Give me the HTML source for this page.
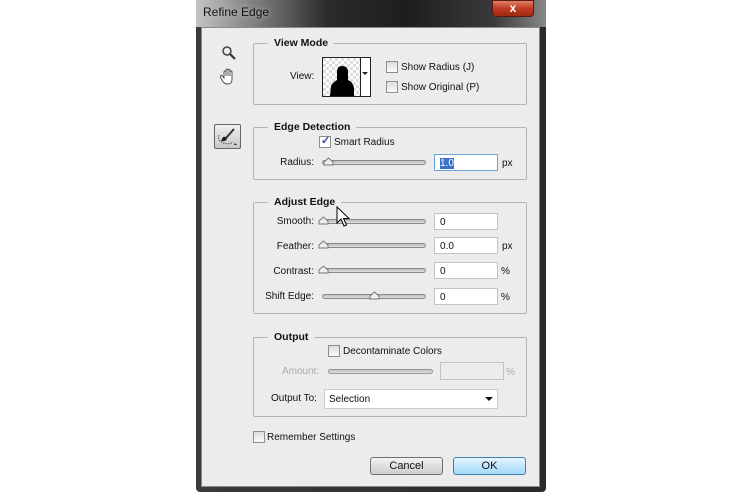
<!DOCTYPE html>
<html><head><meta charset="utf-8"><style>
*{margin:0;padding:0;box-sizing:border-box}
body{width:740px;height:493px;background:#fff;position:relative;overflow:hidden;font-family:"Liberation Sans",Arial,sans-serif;font-size:10px;color:#111}
.a{position:absolute}
#win{left:196px;top:0;width:350px;height:492px;background:linear-gradient(90deg,#3a3a3a 0,#2a2a2a 100%);border-radius:0 0 4px 4px}
#title{left:196px;top:0;width:350px;height:27px;background:linear-gradient(90deg,#c4c4c4 0,#9a9a9a 10%,#2a2a2a 38%,#1e1e1e 60%,#3a3a3a 85%,#888 100%)}
#client{left:201px;top:27px;width:339px;height:460px;background:#ececec;border:1px solid #8a8a8a}
.grp{position:absolute;border:1px solid #b4b4b4;border-radius:2px}
.lg{position:absolute;background:#ececec;padding:0 6px;font-weight:bold;font-size:10.5px;top:-7px;left:14px}
.cb{position:absolute;width:12px;height:12px;border:1px solid #8e8e8e;background:linear-gradient(#ddd,#fafafa)}
.sl{position:absolute;height:5px;border:1px solid #8a8a8a;border-radius:3px;background:linear-gradient(#bdbdbd,#e0e0e0)}
.th{position:absolute;width:11px;height:9px}
.in{position:absolute;height:17px;background:#fff;border:1px solid #c4c4c4;padding:3px 5px;font-size:10px}
.r{text-align:right}
.btn{position:absolute;height:18px;border:1px solid #707070;border-radius:3px;background:linear-gradient(#f4f4f4,#dedede 50%,#d0d0d0);text-align:center;font-size:11px;line-height:16px}
</style></head><body>
<div id="win" class="a"></div>
<div id="title" class="a"></div>
<div class="a" style="left:203px;top:5px;font-size:12px;color:#111;text-shadow:0 0 6px #ccc">Refine Edge</div>
<div class="a" style="left:492px;top:0;width:42px;height:17px;border:1px solid #5a1a10;border-radius:0 0 4px 4px;background:linear-gradient(#e0806a,#c03a20 50%,#a02810);color:#fff;font-weight:bold;text-align:center;font-size:12px;line-height:15px">x</div>
<div id="client" class="a"></div>

<svg class="a" style="left:221px;top:45px" width="16" height="16"><circle cx="6" cy="6" r="4" fill="none" stroke="#444" stroke-width="1.5"/><line x1="9" y1="9" x2="14" y2="14" stroke="#333" stroke-width="2.2"/></svg>
<svg class="a" style="left:220px;top:68px" width="17" height="18"><path d="M4 10 V4 a1 1 0 0 1 2 0 V8 V2 a1 1 0 0 1 2 0 V8 V2.5 a1 1 0 0 1 2 0 V8 V4 a1 1 0 0 1 2 0 V11 q0 5 -4 5 h-1 q-3 0 -5 -4 l-1.5 -3 a1 1 0 0 1 2 -1 z" fill="#fff" stroke="#444" stroke-width="0.9"/></svg>
<div class="a" style="left:214px;top:124px;width:27px;height:25px;border:1px solid #666;border-radius:2px;background:linear-gradient(#f0f0f0,#c8c8c8)"></div>
<svg class="a" style="left:216px;top:126px" width="24" height="22"><path d="M18 3 L10 12" stroke="#333" stroke-width="2"/><path d="M7 11 q3 -1 4 2 q-2 3 -6 2 z" fill="#222"/><path d="M3 9 q-2 5 4 8 q6 2 10 -1" fill="none" stroke="#555" stroke-dasharray="1.5 1"/><path d="M19 17 l2 2 h-3z" fill="#222"/></svg>

<div class="grp" style="left:253px;top:43px;width:274px;height:62px"><div class="lg">View Mode</div></div>
<div class="a" style="left:290px;top:71px">View:</div>
<div class="a" style="left:322px;top:57px;width:49px;height:40px;border:1px solid #222;background:#fff"></div>
<svg class="a" style="left:323px;top:58px" width="37" height="38"><defs><pattern id="ck" width="6" height="6" patternUnits="userSpaceOnUse"><rect width="6" height="6" fill="#fff"/><rect width="3" height="3" fill="#ddd"/><rect x="3" y="3" width="3" height="3" fill="#ddd"/></pattern></defs><rect width="37" height="38" fill="url(#ck)"/><path d="M7 38 L8 28 Q10 24 14 22 L14 14 Q14 8 19 8 Q25 8 25 14 L25 22 Q30 24 31 30 L31 38Z" fill="#000"/></svg>
<div class="a" style="left:360px;top:57px;width:1px;height:40px;background:#222"></div>
<div class="a" style="left:362px;top:72px;width:0;height:0;border-left:3px solid transparent;border-right:3px solid transparent;border-top:3px solid #222"></div>
<div class="cb" style="left:386px;top:61px"></div><div class="a" style="left:401px;top:62px">Show Radius (J)</div>
<div class="cb" style="left:386px;top:81px"></div><div class="a" style="left:401px;top:82px">Show Original (P)</div>

<div class="grp" style="left:253px;top:127px;width:274px;height:53px"><div class="lg">Edge Detection</div></div>
<div class="cb" style="left:319px;top:136px;background:#fff"></div>
<div class="a" style="left:321px;top:134px;color:#2a4aa8;font-weight:bold;font-size:11px">✓</div>
<div class="a" style="left:334px;top:137px">Smart Radius</div>
<div class="a r" style="left:270px;width:44px;top:157px">Radius:</div>
<div class="sl" style="left:322px;top:160px;width:104px"></div>
<svg class="th" style="left:323px;top:157px"><path d="M1 8 V5 L5.5 1 L10 5 V8Z" fill="#eee" stroke="#777"/></svg>
<div class="in" style="left:434px;top:154px;width:64px;border:1px solid #6aa2d8"><span style="background:#3a70c8;color:#fff">1.0</span></div>
<div class="a" style="left:502px;top:158px">px</div>

<div class="grp" style="left:253px;top:202px;width:274px;height:112px"><div class="lg">Adjust Edge</div></div>
<div class="a r" style="left:250px;width:64px;top:216px">Smooth:</div>
<div class="sl" style="left:322px;top:219px;width:104px"></div>
<svg class="th" style="left:318px;top:216px"><path d="M1 8 V5 L5.5 1 L10 5 V8Z" fill="#eee" stroke="#777"/></svg>
<div class="in" style="left:434px;top:213px;width:64px">0</div>
<div class="a r" style="left:250px;width:64px;top:241px">Feather:</div>
<div class="sl" style="left:322px;top:243px;width:104px"></div>
<svg class="th" style="left:318px;top:240px"><path d="M1 8 V5 L5.5 1 L10 5 V8Z" fill="#eee" stroke="#777"/></svg>
<div class="in" style="left:434px;top:237px;width:64px">0.0</div>
<div class="a" style="left:502px;top:241px">px</div>
<div class="a r" style="left:250px;width:64px;top:266px">Contrast:</div>
<div class="sl" style="left:322px;top:268px;width:104px"></div>
<svg class="th" style="left:318px;top:265px"><path d="M1 8 V5 L5.5 1 L10 5 V8Z" fill="#eee" stroke="#777"/></svg>
<div class="in" style="left:434px;top:262px;width:64px">0</div>
<div class="a" style="left:501px;top:266px">%</div>
<div class="a r" style="left:250px;width:64px;top:291px">Shift Edge:</div>
<div class="sl" style="left:322px;top:294px;width:104px"></div>
<svg class="th" style="left:369px;top:291px"><path d="M1 8 V5 L5.5 1 L10 5 V8Z" fill="#eee" stroke="#777"/></svg>
<div class="in" style="left:434px;top:288px;width:64px">0</div>
<div class="a" style="left:501px;top:292px">%</div>

<svg class="a" style="left:336px;top:206px" width="14" height="22"><path d="M1 1 V17 L5 13 L8 20 L10.5 19 L7.5 12.5 L13 12.5 Z" fill="#fff" stroke="#000" stroke-width="1"/></svg>

<div class="grp" style="left:253px;top:337px;width:274px;height:80px"><div class="lg">Output</div></div>
<div class="cb" style="left:328px;top:345px"></div><div class="a" style="left:343px;top:346px">Decontaminate Colors</div>
<div class="a" style="left:282px;top:366px;color:#aaa">Amount:</div>
<div class="sl" style="left:328px;top:369px;width:105px;border-color:#999;background:linear-gradient(#c4c4c4,#dedede)"></div>
<div class="a" style="left:440px;top:362px;width:64px;height:18px;border:1px solid #c4c4c4;background:#ececec"></div>
<div class="a" style="left:506px;top:367px;color:#aaa">%</div>
<div class="a" style="left:271px;top:393px">Output To:</div>
<div class="a" style="left:324px;top:389px;width:174px;height:20px;background:#fff;border:1px solid #ccc;padding:4px 4px">Selection</div>
<div class="a" style="left:485px;top:397px;width:0;height:0;border-left:4px solid transparent;border-right:4px solid transparent;border-top:4px solid #111"></div>

<div class="cb" style="left:253px;top:431px"></div><div class="a" style="left:267px;top:432px">Remember Settings</div>

<div class="btn" style="left:370px;top:457px;width:73px">Cancel</div>
<div class="btn" style="left:453px;top:457px;width:73px;border-color:#3c7fb1;background:linear-gradient(#eaf6fd,#bee6fd 50%,#a7d9f5)">OK</div>
</body></html>
